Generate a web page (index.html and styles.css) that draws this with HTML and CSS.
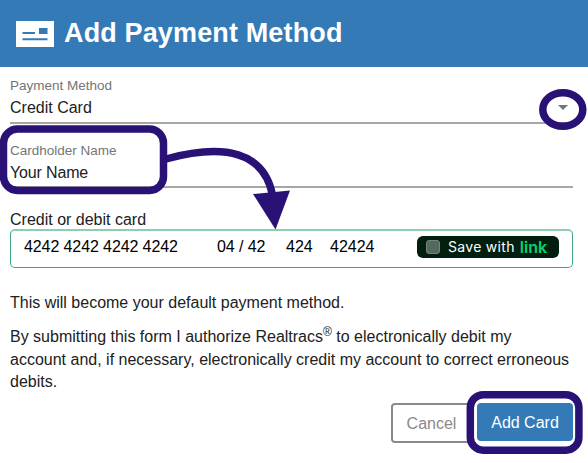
FILE: index.html
```html
<!DOCTYPE html>
<html lang="en">
<head>
    <meta charset="UTF-8">
    <meta name="viewport" content="width=device-width, initial-scale=1.0">
    <title>Add Payment Method</title>
    <link rel="stylesheet" href="styles.css">
</head>
<body>
    <header class="header">
        <svg class="card-icon" width="38" height="26" viewBox="0 0 38 26">
            <rect width="38" height="26" fill="#fff"/>
            <path d="M6.5 12h12.5M6.5 18.3H31.5" stroke="#337ab7" stroke-width="2"/>
            <rect x="23" y="7" width="8.5" height="6" fill="#337ab7"/>
        </svg>
        <h1>Add Payment Method</h1>
    </header>

    <main class="container">
        <div class="field">
            <div>
                <div class="label">Payment Method</div>
                <div class="value">Credit Card</div>
            </div>
            <svg class="caret" width="10" height="5" viewBox="0 0 10 5">
                <path d="M0 0H10L5 5Z" fill="#757575"/>
            </svg>
        </div>

        <div class="field">
            <div>
                <div class="label">Cardholder Name</div>
                <div class="value name-value">Your Name</div>
            </div>
        </div>

        <div class="card-title">Credit or debit card</div>
        <div class="card-box">
            <span class="card-number">4242 4242 4242 4242</span>
            <span class="card-date">04 / 42</span>
            <span class="card-cvc">424</span>
            <span class="card-zip">42424</span>
            <div class="link-save">
                <span class="checkbox"></span>
                <span class="save-text">Save with</span>
                <span class="link-logo">link</span>
            </div>
        </div>

        <p class="default-text">This will become your default payment method.</p>
        <p class="terms">
            By submitting this form I authorize Realtracs<sup>®</sup> to electronically debit my<br>
            account and, if necessary, electronically credit my account to correct erroneous<br>
            debits.
        </p>

        <div class="buttons">
            <button class="cancel">Cancel</button>
            <button class="add">Add Card</button>
        </div>
    </main>

    <!-- Highlights and arrow over the form -->
    <svg class="marks" width="588" height="463" viewBox="0 0 588 463">
        <g fill="none" stroke="#2a1175" stroke-width="7.5">
            <ellipse cx="562.8" cy="109.5" rx="20" ry="16.8"/>
            <rect x="3.5" y="129" width="160" height="61.5" rx="14"/>
            <rect x="470.3" y="394.7" width="108.6" height="55.5" rx="13"/>
            <path d="M166 159C225 143 264 152 272.5 195"/>
        </g>
        <path d="M253 194L290 190.5L275.5 229.5Z" fill="#2a1175"/>
    </svg>
</body>
</html>
```

FILE: styles.css
```css
body {
    font-family: "Liberation Sans", Arial, sans-serif;
    margin: 0;
    padding: 0;
    width: 588px;
    height: 463px;
    overflow: hidden;
    position: relative;
    background-color: #fff;
    color: #212121;
    font-size: 16px;
}
.header {
    display: flex;
    align-items: center;
    height: 67px;
    padding-left: 16px;
    gap: 10px;
    box-sizing: border-box;
    background-color: #337ab7;
    color: white;
}
.header h1 {
    margin: 0;
    padding-bottom: 2px;
    font-size: 27px;
    line-height: 30px;
    letter-spacing: 0.14px;
    white-space: nowrap;
}
.container {
    padding: 0 15px 0 10px;
}
.field {
    display: flex;
    justify-content: space-between;
    height: 64px;
    padding-top: 10px;
    box-sizing: border-box;
    border-bottom: 2px solid #a6a6a6;
}
.field:first-child {
    height: 57px;
}
.field + .field {
    padding-top: 18px;
}
.label {
    color: #757575;
    font-size: 13.5px;
    line-height: 18px;
}
.value {
    line-height: 26px;
}
.name-value {
    letter-spacing: -0.15px;
}
.caret {
    margin: 28px 5px 0 0;
}
.card-title {
    margin-top: 21px;
    height: 20px;
    line-height: 22px;
}
.card-box {
    display: flex;
    align-items: center;
    height: 39px;
    padding: 0 13px 4px 13px;
    box-sizing: border-box;
    border: 1px solid #3fa882;
    border-top: 2px solid #8fcdb3;
    border-radius: 5px;
    color: #000;
    white-space: nowrap;
}
.card-number {
    width: 193px;
    letter-spacing: -0.1px;
}
.card-date {
    width: 69px;
    letter-spacing: -0.1px;
}
.card-cvc {
    width: 44px;
}
.link-save {
    display: flex;
    align-items: center;
    width: 142px;
    height: 22px;
    margin-left: auto;
    margin-bottom: 1px;
    padding-left: 9px;
    box-sizing: border-box;
    border-radius: 6px;
    background-color: #011e0f;
    color: white;
}
.checkbox {
    width: 14px;
    height: 14px;
    margin-right: 8px;
    box-sizing: border-box;
    border: 1px solid #72857b;
    border-radius: 3px;
    background-color: #556960;
}
.save-text {
    font-family: Inter, sans-serif;
    font-size: 14px;
    letter-spacing: 0.3px;
    margin-right: 5px;
}
.link-logo {
    font-family: Inter, sans-serif;
    font-size: 16px;
    font-weight: 600;
    color: #00d66f;
}
.default-text {
    margin: 24px 0 0;
    line-height: 22px;
}
.terms {
    margin: 12px 0 0;
    line-height: 22.5px;
    white-space: nowrap;
}
.terms sup {
    font-size: 12px;
    line-height: 0;
}
.buttons {
    display: flex;
    justify-content: flex-end;
    align-items: flex-start;
    margin-top: 9px;
}
.buttons button {
    height: 40px;
    padding: 2px 0 0;
    box-sizing: border-box;
    font-family: inherit;
    font-size: 16px;
    border-radius: 4px;
}
.buttons .cancel {
    width: 83px;
    margin-right: 3px;
    padding-right: 2px;
    border: 2px solid #8a8a8a;
    background-color: #fff;
    color: #8a8a8a;
}
.buttons .add {
    width: 96px;
    height: 38px;
    border: none;
    background-color: #337ab7;
    color: white;
}
.marks {
    position: absolute;
    top: 0;
    left: 0;
}
```
